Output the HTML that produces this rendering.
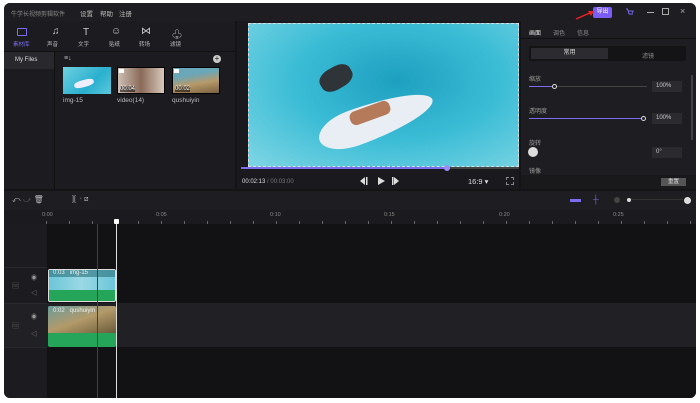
<!DOCTYPE html>
<html><head><meta charset="utf-8"><style>
*{margin:0;padding:0;box-sizing:border-box}
body{width:700px;height:403px;background:#fff;font-family:"Liberation Sans","Noto Sans CJK SC",sans-serif;position:relative;overflow:hidden;color:#ccc}
.a{position:absolute}
.win{left:4px;top:3px;width:692px;height:395px;background:#141417;border-radius:6px;overflow:hidden}
.t{font-size:6px;color:#bbb;white-space:nowrap}
</style></head><body>
<div class="a win">
 <!-- title bar -->
 <div class="a" style="left:0;top:0;width:692px;height:18px;background:#1e1e22"></div>
 <div class="a t" style="left:7px;top:6px;color:#888">牛学长视频剪辑软件</div>
 <div class="a t" style="left:76px;top:5px;font-size:6.5px">设置</div>
 <div class="a t" style="left:96px;top:5px;font-size:6.5px">帮助</div>
 <div class="a t" style="left:115px;top:5px;font-size:6.5px">注册</div>
 <div class="a" style="left:589px;top:4px;width:19px;height:11px;background:#7b5cf5;border-radius:2px;color:#fff;font-size:6px;text-align:center;line-height:11px">导出</div>
 <svg class="a" style="left:570px;top:4px" width="22" height="14"><path d="M2 12 L18 5" stroke="#e22" stroke-width="1.5"/><path d="M20 4 L14 4 L17 9Z" fill="#e22"/></svg>
 <svg class="a" style="left:621px;top:5px" width="9" height="8"><path d="M1 1H2.5L4 6H8M3 3H8L7.5 5" stroke="#7b6cf0" fill="none" stroke-width="0.9"/></svg>
 <div class="a" style="left:643px;top:9px;width:7px;height:1px;background:#aaa"></div>
 <div class="a" style="left:658px;top:5px;width:7px;height:7px;border:1px solid #aaa"></div>
 <div class="a t" style="left:676px;top:3px;font-size:9px;color:#aaa">×</div>

 <!-- left panel -->
 <div class="a" style="left:0;top:18px;width:231px;height:168px;background:#1c1c20"></div>
 <div class="a" style="left:0;top:48px;width:231px;height:1px;background:#111"></div>
 <div class="a" style="left:50px;top:49px;width:1px;height:137px;background:#111"></div>
 <div class="a" style="left:0;top:49px;width:50px;height:17px;background:#28282d"></div>
 <div class="a t" style="left:11px;top:54px;color:#ddd">My Files</div>
 <div class="a" style="left:13px;top:25px;width:10px;height:8px;border:1px solid #7b6cf0;border-radius:1px"></div>
 <div class="a t" style="left:9px;top:37px;color:#7b6cf0;font-size:5.5px">素材库</div>
 <div class="a t" style="left:48px;top:23px;font-size:10px;color:#ccc">♫</div><div class="a t" style="left:43px;top:37px;font-size:5.5px">声音</div>
 <div class="a t" style="left:79px;top:24px;font-size:10px;color:#ccc">T</div><div class="a t" style="left:74px;top:37px;font-size:5.5px">文字</div>
 <div class="a t" style="left:107px;top:23px;font-size:10px;color:#ccc">☺</div><div class="a t" style="left:105px;top:37px;font-size:5.5px">贴纸</div>
 <div class="a t" style="left:137px;top:23px;font-size:10px;color:#ccc">⋈</div><div class="a t" style="left:135px;top:37px;font-size:5.5px">转场</div>
 <div class="a t" style="left:168px;top:23px;font-size:10px;color:#ccc">♧</div><div class="a t" style="left:166px;top:37px;font-size:5.5px">滤镜</div>
 <div class="a t" style="left:60px;top:52px;font-size:7px">≡↓</div>
 <div class="a" style="left:209px;top:52px;width:8px;height:8px;border-radius:50%;background:#ccc;color:#222;font-size:8px;line-height:8px;text-align:center">+</div>
 <div class="a" style="left:59px;top:64px;width:48px;height:27px;background:linear-gradient(135deg,#6fd0e0,#2ab0cf 60%,#5cc8dc)"></div>
 <div class="a" style="left:70px;top:77px;width:20px;height:7px;background:#eef;border-radius:40%;transform:rotate(-15deg)"></div>
 <div class="a" style="left:113px;top:64px;width:48px;height:27px;background:linear-gradient(90deg,#cdbfb3,#8a6a58 50%,#d8c8bb);border:1px solid #000"></div>
 <div class="a" style="left:168px;top:64px;width:48px;height:27px;background:linear-gradient(170deg,#6aa7b8 30%,#b79a6a 60%,#7a6040);border:1px solid #000"></div>
 <div class="a" style="left:115px;top:66px;width:5px;height:4px;background:#fff"></div>
 <div class="a" style="left:170px;top:66px;width:5px;height:4px;background:#fff"></div>
 <div class="a t" style="left:116px;top:83px;font-size:6px;color:#fff;background:#0008">00:04</div>
 <div class="a t" style="left:171px;top:83px;font-size:6px;color:#fff;background:#0008">00:02</div>
 <div class="a t" style="left:59px;top:94px;font-size:6.5px">img-15</div>
 <div class="a t" style="left:113px;top:94px;font-size:6.5px">video(14)</div>
 <div class="a t" style="left:168px;top:94px;font-size:6.5px">qushuiyin</div>

 <!-- preview -->
 <div class="a" style="left:233px;top:18px;width:282px;height:168px;background:#1a1a1e"></div>
 <div class="a" style="left:244px;top:20px;width:271px;height:144px;background:radial-gradient(ellipse at 55% 40%,#1d9fbf,#3cbdd6 50%,#7fd6e4);border:1px dashed #ddd"></div>
 <div class="a" style="left:312px;top:99px;width:120px;height:36px;background:#e8eef4;border-radius:30% 70% 70% 30%/50%;transform:rotate(-20deg)"></div>
 <div class="a" style="left:345px;top:103px;width:42px;height:14px;background:#b47a5a;border-radius:6px;transform:rotate(-20deg)"></div>
 <div class="a" style="left:315px;top:64px;width:34px;height:22px;background:#2e3438;border-radius:40%;transform:rotate(-30deg)"></div>
 <div class="a" style="left:237px;top:164px;width:207px;height:2px;background:#7b6cf0"></div>
 <div class="a" style="left:444px;top:164px;width:71px;height:2px;background:#444"></div>
 <div class="a" style="left:440px;top:162px;width:6px;height:6px;border-radius:50%;background:#9b8cf8"></div>
 <div class="a t" style="left:238px;top:176px;font-size:6px;color:#ddd">00:02:13 <span style="color:#777">/ 00:03:00</span></div>
 <svg class="a" style="left:354px;top:173px" width="42" height="10"><path d="M7 1V9L2 5Z M8 1H9.5V9H8Z" fill="#ddd"/><path d="M20 1V9L27 5Z" fill="#ddd"/><path d="M36 1V9L41 5Z M34 1H35.5V9H34Z" fill="#ddd"/></svg>
 <div class="a t" style="left:464px;top:174px;font-size:7.5px;color:#ddd">16:9 ▾</div>
 <div class="a" style="left:502px;top:174px;width:8px;height:8px;border:1px dashed #888"></div>

 <!-- right panel -->
 <div class="a" style="left:517px;top:18px;width:175px;height:168px;background:#1e1e22"></div>
 <div class="a" style="left:517px;top:35px;width:175px;height:1px;background:#111"></div>
 <div class="a t" style="left:525px;top:25px;color:#eee">画面</div>
 <div class="a t" style="left:549px;top:25px;color:#888">调色</div>
 <div class="a t" style="left:573px;top:25px;color:#888">信息</div>
 <div class="a" style="left:525px;top:43px;width:157px;height:15px;background:#141417;border-radius:2px"></div>
 <div class="a" style="left:527px;top:45px;width:77px;height:11px;background:#2b2b30;color:#ddd;font-size:6px;text-align:center;line-height:11px">常用</div>
 <div class="a t" style="left:638px;top:48px;color:#888">滤镜</div>
 <div class="a t" style="left:525px;top:71px;color:#999">缩放</div>
 <div class="a" style="left:525px;top:83px;width:118px;height:1px;background:#444"></div>
 <div class="a" style="left:525px;top:83px;width:26px;height:1px;background:#7b6cf0"></div>
 <div class="a" style="left:548px;top:81px;width:5px;height:5px;border:1px solid #ddd;border-radius:50%;background:#1e1e22"></div>
 <div class="a" style="left:648px;top:78px;width:30px;height:11px;background:#2a2a2f;font-size:6px;line-height:11px;padding-left:4px;color:#ccc">100%</div>
 <div class="a t" style="left:525px;top:103px;color:#999">透明度</div>
 <div class="a" style="left:525px;top:115px;width:114px;height:1px;background:#7b6cf0"></div>
 <div class="a" style="left:637px;top:113px;width:5px;height:5px;border:1px solid #ddd;border-radius:50%;background:#1e1e22"></div>
 <div class="a" style="left:648px;top:110px;width:30px;height:11px;background:#2a2a2f;font-size:6px;line-height:11px;padding-left:4px;color:#ccc">100%</div>
 <div class="a t" style="left:525px;top:135px;color:#999">旋转</div>
 <div class="a" style="left:524px;top:144px;width:10px;height:10px;border-radius:50%;background:#ddd"></div>
 <div class="a" style="left:648px;top:144px;width:30px;height:11px;background:#2a2a2f;font-size:6px;line-height:11px;padding-left:4px;color:#ccc">0°</div>
 <div class="a t" style="left:525px;top:163px;color:#999">镜像</div>
 <div class="a" style="left:517px;top:172px;width:175px;height:14px;background:#19191c"></div>
 <div class="a" style="left:657px;top:175px;width:25px;height:8px;background:#555;color:#ddd;font-size:5.5px;text-align:center;line-height:8px">重置</div>
 <div class="a" style="left:687px;top:72px;width:2px;height:65px;background:#444"></div>

 <!-- timeline toolbar -->
 <div class="a" style="left:0;top:188px;width:692px;height:19px;background:#1e1e22"></div>
 <div class="a t" style="left:8px;top:192px;font-size:8px;color:#bbb">⤺ <span style="color:#555">⤻</span> 🗑︎</div>
 <div class="a t" style="left:68px;top:193px;font-size:7px;color:#bbb">][ <span style="color:#555">◔</span> ⧄</div>
 <div class="a" style="left:566px;top:196px;width:11px;height:3px;background:#7b6cf0"></div>
 <div class="a t" style="left:589px;top:192px;font-size:8px;color:#7b6cf0">┼</div>
 <div class="a" style="left:610px;top:194px;width:6px;height:6px;border-radius:50%;background:#444"></div>
 <div class="a" style="left:623px;top:196px;width:56px;height:1px;background:#333"></div>
 <div class="a" style="left:623px;top:195px;width:4px;height:4px;border-radius:50%;background:#ddd"></div>
 <div class="a" style="left:680px;top:194px;width:7px;height:7px;border-radius:50%;background:#ddd"></div>
 <!-- ruler -->
 <div class="a" style="left:0;top:207px;width:692px;height:14px;background:#1b1b1f"></div>
 <div class="a t" style="left:38px;top:209px;font-size:5.5px;color:#888">0:00</div>
 <div class="a t" style="left:152px;top:209px;font-size:5.5px;color:#888">0:05</div>
 <div class="a t" style="left:266px;top:209px;font-size:5.5px;color:#888">0:10</div>
 <div class="a t" style="left:380px;top:209px;font-size:5.5px;color:#888">0:15</div>
 <div class="a t" style="left:495px;top:209px;font-size:5.5px;color:#888">0:20</div>
 <div class="a t" style="left:609px;top:209px;font-size:5.5px;color:#888">0:25</div>
 <div class="a" style="left:20px;top:218px;width:672px;height:3px;background:repeating-linear-gradient(90deg,transparent 0 22px,#666 22px 23px)"></div>
 <!-- tracks -->
 <div class="a" style="left:0;top:221px;width:43px;height:174px;background:#1c1c20"></div>
 <div class="a" style="left:43px;top:221px;width:649px;height:174px;background:#121214"></div>
 <div class="a" style="left:0;top:264px;width:43px;height:1px;background:#2a2a2e"></div>
 <div class="a" style="left:0;top:300px;width:692px;height:44px;background:#212125"></div>
 <div class="a" style="left:0;top:300px;width:43px;height:1px;background:#2a2a2e"></div>
 <div class="a" style="left:0;top:344px;width:43px;height:1px;background:#2a2a2e"></div>
 <div class="a t" style="left:27px;top:270px;font-size:6px;color:#999">◉</div>
 <div class="a t" style="left:27px;top:285px;font-size:6px;color:#999">◁</div>
 <div class="a t" style="left:8px;top:278px;font-size:7px;color:#666">▤</div>
 <div class="a t" style="left:27px;top:309px;font-size:6px;color:#999">◉</div>
 <div class="a t" style="left:27px;top:326px;font-size:6px;color:#999">◁</div>
 <div class="a t" style="left:8px;top:318px;font-size:7px;color:#666">▤</div>
 <!-- clip 1 -->
 <div class="a" style="left:44px;top:266px;width:68px;height:33px;border:1px solid #ddd;border-radius:2px;background:#25a55a;overflow:hidden">
  <div style="height:20px;background:linear-gradient(90deg,#6bc6d8,#9ad8e4,#6bc6d8)"></div>
 </div>
 <div class="a" style="left:45px;top:267px;width:66px;height:7px;background:#2a6f7a99"></div>
 <div class="a t" style="left:49px;top:267px;font-size:6px;color:#eee">0:03 &nbsp; img-15</div>
 <!-- clip 2 -->
 <div class="a" style="left:44px;top:303px;width:68px;height:41px;border-radius:2px;background:#25a55a;overflow:hidden">
  <div style="height:27px;background:linear-gradient(160deg,#6a9c9a,#b39a6a 50%,#6a5a3a)"></div>
 </div>
 <div class="a t" style="left:49px;top:305px;font-size:6px;color:#eee">0:02 &nbsp; qushuiyin</div>
 <!-- lines -->
 <div class="a" style="left:93px;top:221px;width:1px;height:174px;background:#3a3a80"></div>
 <div class="a" style="left:112px;top:218px;width:1px;height:177px;background:#ddd"></div>
 <div class="a" style="left:110px;top:216px;width:5px;height:5px;background:#fff;border-radius:1px"></div>
</div>
</body></html>
